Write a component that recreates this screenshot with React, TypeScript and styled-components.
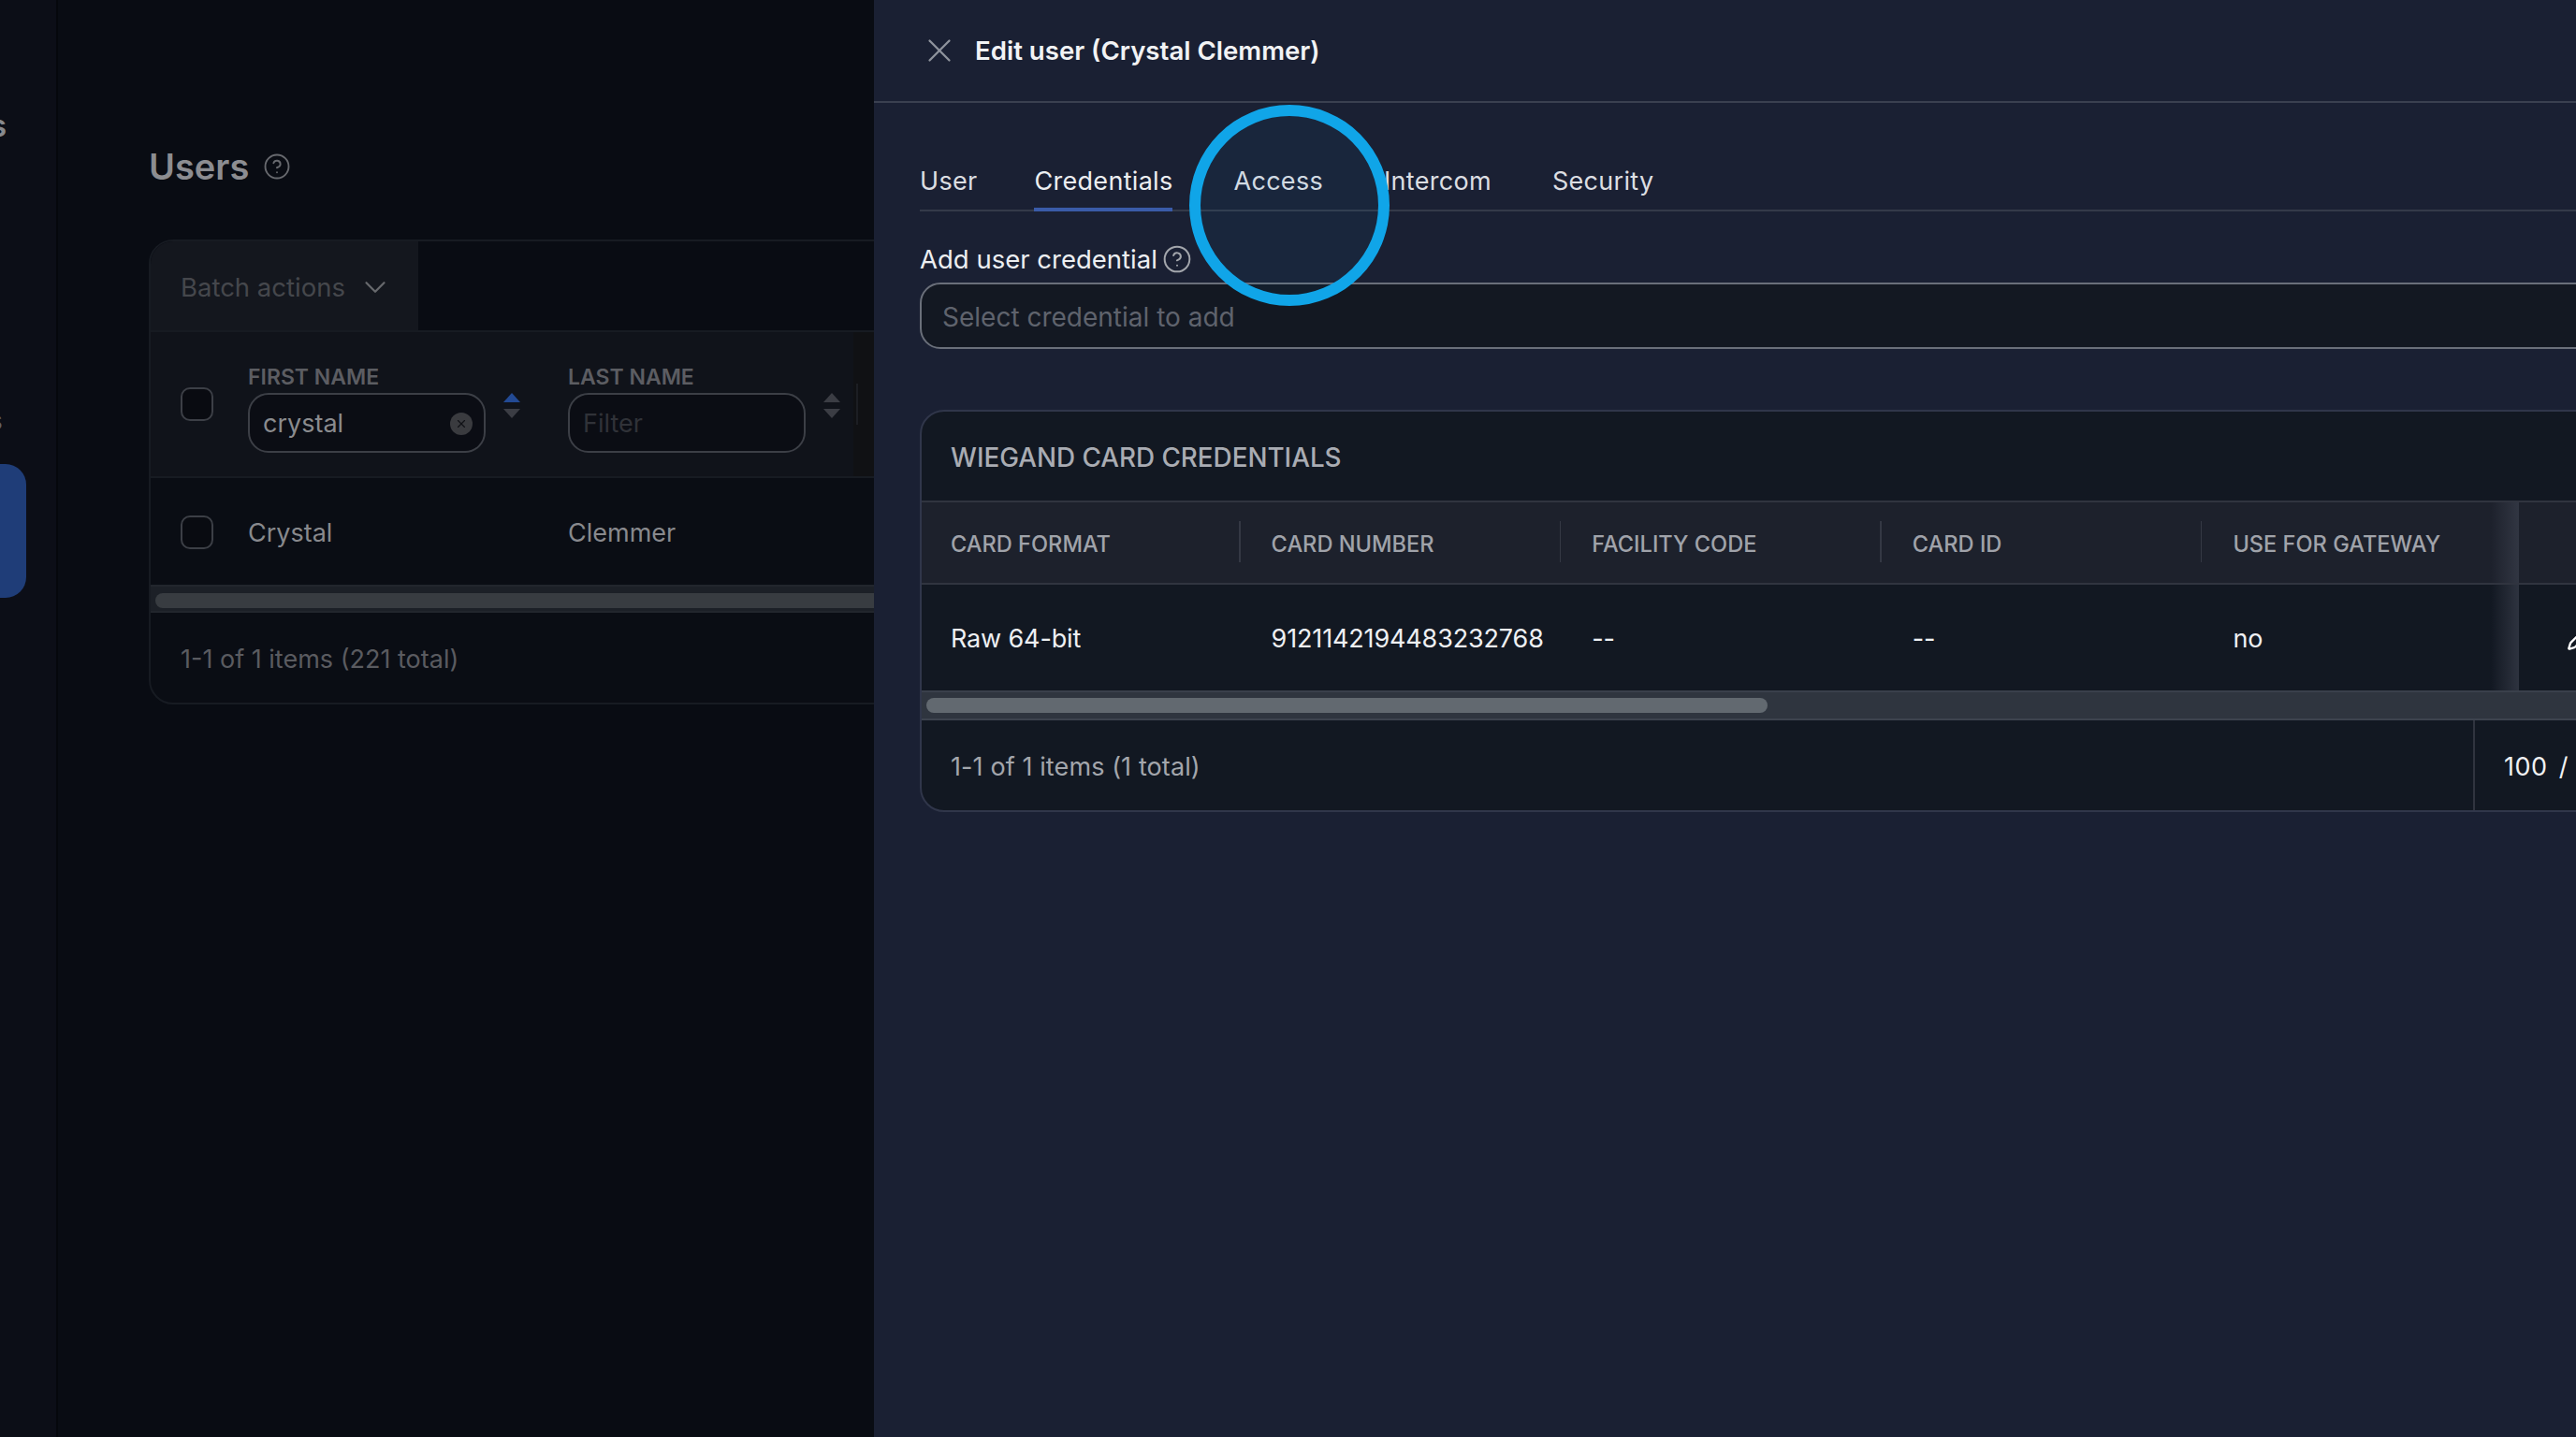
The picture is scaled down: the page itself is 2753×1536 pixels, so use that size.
import styled, { createGlobalStyle } from 'styled-components'
import { ChevronDown, CircleHelp, Pencil, X } from 'lucide-react'

const GlobalStyle = createGlobalStyle`
  html, body {
    margin: 0;
    padding: 0;
    background: #090c13;
    overflow: hidden;
  }
  * {
    box-sizing: border-box;
  }
`

const Page = styled.div`
  position: relative;
  display: flex;
  width: 2753px;
  height: 1536px;
  overflow: hidden;
  font-family: Inter, 'Liberation Sans', sans-serif;
  font-size: 27px;
`

/* dimmed app behind the drawer */
const Sidebar = styled.nav`
  flex: none;
  width: 62px;
  padding-top: 116px;
  background: #0c0e17;
  border-right: 2px solid #05070c;
  overflow: hidden;
`
const NavLabel = styled.div<{ $dim?: boolean }>`
  height: 36px;
  margin-left: -11px;
  font-size: ${p => (p.$dim ? 26 : 33)}px;
  font-weight: ${p => (p.$dim ? 400 : 600)};
  line-height: 36px;
  color: ${p => (p.$dim ? '#606166' : '#88898d')};
`
const NavSpacer = styled.div`
  height: 280px;
`
const NavPill = styled.div`
  width: 48px;
  height: 143px;
  margin: 28px 0 0 -20px;
  background: #1f3d78;
  border-radius: 22px;
`

const Main = styled.main`
  flex: none;
  width: 872px;
  padding: 0 0 0 97px;
  overflow: hidden;
`
const PageTitle = styled.h1`
  display: flex;
  align-items: center;
  gap: 15px;
  height: 256px;
  margin: 0;
  padding-top: 100px;
  font-size: 38px;
  font-weight: 600;
  color: #8c8d91;

  svg {
    color: #67696e;
  }
`
const UsersCard = styled.section`
  width: 1500px;
  height: 497px;
  background: #0a0d14;
  border: 2px solid #171b22;
  border-radius: 26px 0 0 26px;
  overflow: hidden;
`
const BatchBar = styled.div`
  display: flex;
  height: 97px;
  background: #090c13;
  border-bottom: 2px solid #171b22;
`
const BatchButton = styled.div`
  display: flex;
  align-items: center;
  gap: 13px;
  width: 286px;
  padding: 2px 0 0 32px;
  background: #14171e;
  font-size: 27.5px;
  color: #45474c;

  svg {
    color: #66686c;
  }
`
const FilterRow = styled.div`
  display: flex;
  align-items: center;
  height: 156px;
  background: #10131a;
  border-bottom: 2px solid #171b22;
`
const Check = styled.span`
  flex: none;
  display: block;
  width: 35px;
  height: 36px;
  margin: 0 37px 0 32px;
  background: #090b11;
  border: 2px solid #3c3f46;
  border-radius: 10px;
`
const FilterCol = styled.div`
  flex: none;
  display: flex;
  align-items: flex-end;
  width: 342px;
  margin-top: 8px;
`
const FilterField = styled.div`
  width: 254px;
`
const FilterLabel = styled.div`
  margin-bottom: 3px;
  font-size: 23px;
  font-weight: 600;
  line-height: 28px;
  color: #5c5d62;
`
const FilterInput = styled.div<{ $empty?: boolean }>`
  display: flex;
  align-items: center;
  justify-content: space-between;
  height: 64px;
  padding: 2px 12px 0 14px;
  background: #0b0d14;
  border: 2px solid #3c3f46;
  border-radius: 22px;
  color: ${p => (p.$empty ? '#303238' : '#8a8b8e')};
`
const ClearBadge = styled.span`
  display: flex;
  align-items: center;
  justify-content: center;
  width: 24px;
  height: 24px;
  background: #3a3b3f;
  border-radius: 50%;
  color: #111217;
`
const SortArrows = styled.svg`
  flex: none;
  margin: 0 0 37px 19px;
`
/* start of the fixed column, the drawer cuts it off */
const ShadeCol = styled.div`
  flex: none;
  align-self: stretch;
  display: flex;
  align-items: center;
  width: 200px;
  margin-left: -37px;
  background: #101114;

  &::before {
    content: '';
    width: 2px;
    height: 44px;
    margin-left: 3px;
    background: #1c1e23;
  }
`
const UserRow = styled.div`
  display: flex;
  align-items: center;
  height: 114px;
  padding-top: 2px;
  color: #88898d;
`
const UserCell = styled.div`
  flex: none;
  width: 342px;
`
const DimTrack = styled.div`
  height: 30px;
  padding: 7px 5px;
  background: #1c2027;
  border-top: 2px solid #22262d;
  border-bottom: 2px solid #22262d;
`
const DimThumb = styled.div`
  height: 16px;
  background: #383c41;
  border-radius: 8px;
`
const DimFooter = styled.div`
  display: flex;
  align-items: center;
  height: 96px;
  padding: 2px 0 0 32px;
  color: #5a5b60;
`

/* edit drawer */
const Drawer = styled.aside`
  flex: none;
  width: 1819px;
  background: #1a2033;
  overflow: hidden;
`
const DrawerHeader = styled.header`
  display: flex;
  align-items: center;
  gap: 17px;
  height: 110px;
  padding-left: 49px;
  border-bottom: 2px solid #3a4050;

  svg {
    color: #8f939d;
  }
`
const DrawerTitle = styled.h2`
  margin: 0;
  font-size: 27.6px;
  font-weight: 600;
  color: #f2f3f5;
`
const DrawerBody = styled.div`
  width: 1900px;
  padding-left: 49px;
`
const Tabs = styled.div`
  display: flex;
  gap: 65px;
  height: 116px;
  letter-spacing: 0.3px;
  border-bottom: 2px solid #343a49;
`
const Tab = styled.div<{ $active?: boolean }>`
  display: flex;
  align-items: center;
  height: 116px;
  padding: 72px 0 18px;
  color: ${p => (p.$active ? '#eceef1' : '#dcdee2')};
  border-bottom: 4px solid ${p => (p.$active ? '#3a5ba8' : 'transparent')};

  &:first-child {
    margin-right: -4px;
  }
`
const FieldLabel = styled.label`
  display: flex;
  align-items: center;
  gap: 5px;
  height: 76px;
  padding-top: 26px;
  font-size: 27.5px;
  color: #eceef1;

  svg {
    color: #a3a6ac;
  }
`
const CredentialSelect = styled.div`
  display: flex;
  align-items: center;
  height: 71px;
  padding: 2px 0 0 22px;
  background: #131822;
  border: 2px solid #6a6f7a;
  border-radius: 22px;
  font-size: 28px;
  color: #5f636d;
`
const CredentialCard = styled.section`
  height: 430px;
  margin-top: 65px;
  background: #121822;
  border: 2px solid #30364a;
  border-radius: 26px;
  overflow: hidden;
`
const CardTitle = styled.div`
  display: flex;
  align-items: center;
  height: 97px;
  padding: 2px 0 0 31px;
  font-size: 27.8px;
  font-weight: 500;
  color: #a9acb3;
  border-bottom: 2px solid #30343f;
`
const TableHead = styled.div`
  display: flex;
  height: 88px;
  background: #1d212c;
  border-bottom: 2px solid #30343f;
`
const HeadCell = styled.div<{ $sep?: boolean }>`
  position: relative;
  flex: none;
  display: flex;
  align-items: center;
  width: 342.6px;
  padding: 2px 0 0 31px;
  font-size: 23.6px;
  font-weight: 500;
  color: #a0a3aa;

  &::after {
    content: '';
    display: ${p => (p.$sep ? 'block' : 'none')};
    position: absolute;
    right: 2px;
    top: 20px;
    bottom: 22px;
    width: 1.5px;
    background: #343844;
  }
`
const TableRow = styled.div`
  display: flex;
  height: 113px;
  letter-spacing: -0.15px;
  color: #eef0f3;
`
const BodyCell = styled.div`
  flex: none;
  display: flex;
  align-items: center;
  width: 342.6px;
  padding: 2px 0 0 31px;
`
/* fixed actions column, with the scroll shadow on its left */
const PinnedCell = styled.div`
  position: relative;
  flex: 1;
  display: flex;
  align-items: center;
  margin-left: -6px;
  padding-left: 51px;
  color: #ffffff;

  &::before {
    content: '';
    position: absolute;
    left: -30px;
    top: 0;
    bottom: 0;
    width: 30px;
    background: linear-gradient(90deg, rgba(58, 63, 76, 0), rgba(58, 63, 76, 0.7));
  }
`
const ScrollTrack = styled.div`
  height: 32px;
  padding: 6px 5px;
  background: #2f353f;
  border-top: 2px solid #3a404b;
  border-bottom: 2px solid #3d434e;
`
const ScrollThumb = styled.div`
  width: 899px;
  height: 16px;
  background: #626970;
  border-radius: 8px;
`
const CardFooter = styled.div`
  display: flex;
  height: 98px;
`
const ItemCount = styled.div`
  display: flex;
  align-items: center;
  width: 1658px;
  padding: 1px 0 0 31px;
  letter-spacing: 0.1px;
  color: #a3a6ac;
`
const PageSize = styled.div`
  display: flex;
  align-items: center;
  padding: 1px 0 0 31px;
  white-space: nowrap;
  letter-spacing: 0.5px;
  word-spacing: 4px;
  color: #f0f1f3;
  border-left: 2px solid #30343f;
`

/* click marker from the screen recording */
const ClickMarker = styled.div`
  position: absolute;
  left: 1271px;
  top: 112px;
  width: 214px;
  height: 215px;
  background: rgba(10, 165, 232, 0.05);
  border: 12px solid #10a5e8;
  border-radius: 50%;
`

const columns = ['CARD FORMAT', 'CARD NUMBER', 'FACILITY CODE', 'CARD ID', 'USE FOR GATEWAY']
const values = ['Raw 64-bit', '9121142194483232768', '--', '--', 'no']
const tabs = ['User', 'Credentials', 'Access', 'Intercom', 'Security']

const Sort = ({ up }: { up: string }) => (
  <SortArrows width="18" height="27" viewBox="0 0 18 27">
    <path d="M9 0 18 10H0Z" fill={up} />
    <path d="M0 17H18L9 27Z" fill="#3b3d44" />
  </SortArrows>
)

const App = () => {
  return (
    <Page>
      <GlobalStyle />
      <Sidebar>
        <NavLabel>s</NavLabel>
        <NavSpacer />
        <NavLabel $dim>s</NavLabel>
        <NavPill />
      </Sidebar>
      <Main>
        <PageTitle>
          Users
          <CircleHelp size={30} strokeWidth={1.5} />
        </PageTitle>
        <UsersCard>
          <BatchBar>
            <BatchButton>
              Batch actions
              <ChevronDown size={38} strokeWidth={1.4} />
            </BatchButton>
          </BatchBar>
          <FilterRow>
            <Check />
            <FilterCol>
              <FilterField>
                <FilterLabel>FIRST NAME</FilterLabel>
                <FilterInput>
                  crystal
                  <ClearBadge>
                    <X size={14} strokeWidth={2} />
                  </ClearBadge>
                </FilterInput>
              </FilterField>
              <Sort up="#234a94" />
            </FilterCol>
            <FilterCol>
              <FilterField>
                <FilterLabel>LAST NAME</FilterLabel>
                <FilterInput $empty>Filter</FilterInput>
              </FilterField>
              <Sort up="#3b3d44" />
            </FilterCol>
            <ShadeCol />
          </FilterRow>
          <UserRow>
            <Check />
            <UserCell>Crystal</UserCell>
            <UserCell>Clemmer</UserCell>
          </UserRow>
          <DimTrack>
            <DimThumb />
          </DimTrack>
          <DimFooter>1-1 of 1 items (221 total)</DimFooter>
        </UsersCard>
      </Main>
      <Drawer>
        <DrawerHeader>
          <X size={42} strokeWidth={1.3} />
          <DrawerTitle>Edit user (Crystal Clemmer)</DrawerTitle>
        </DrawerHeader>
        <DrawerBody>
          <Tabs>
            {tabs.map(tab => (
              <Tab key={tab} $active={tab === 'Credentials'}>
                {tab}
              </Tab>
            ))}
          </Tabs>
          <FieldLabel>
            Add user credential
            <CircleHelp size={32} strokeWidth={1.5} />
          </FieldLabel>
          <CredentialSelect>Select credential to add</CredentialSelect>
          <CredentialCard>
            <CardTitle>WIEGAND CARD CREDENTIALS</CardTitle>
            <TableHead>
              {columns.map((col, i) => (
                <HeadCell key={col} $sep={i < 4}>
                  {col}
                </HeadCell>
              ))}
              <PinnedCell />
            </TableHead>
            <TableRow>
              {values.map((value, i) => (
                <BodyCell key={i}>{value}</BodyCell>
              ))}
              <PinnedCell>
                <Pencil size={28} strokeWidth={2} />
              </PinnedCell>
            </TableRow>
            <ScrollTrack>
              <ScrollThumb />
            </ScrollTrack>
            <CardFooter>
              <ItemCount>1-1 of 1 items (1 total)</ItemCount>
              <PageSize>100 / page</PageSize>
            </CardFooter>
          </CredentialCard>
        </DrawerBody>
      </Drawer>
      <ClickMarker />
    </Page>
  )
}

export default App
